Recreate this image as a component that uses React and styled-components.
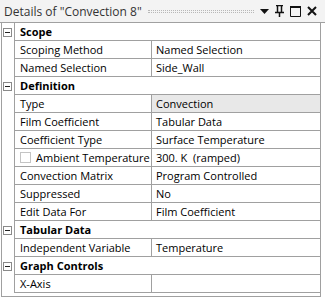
import React from 'react';
import styled, { createGlobalStyle } from 'styled-components';

const GlobalStyle = createGlobalStyle`
  html, body {
    margin: 0;
    padding: 0;
    background: #fff;
  }
  body {
    font-family: "Open Sans", "Noto Sans", sans-serif;
  }
`;

const sections = [
  {
    title: 'Scope',
    rows: [
      { name: 'Scoping Method', value: 'Named Selection' },
      { name: 'Named Selection', value: 'Side_Wall' }
    ]
  },
  {
    title: 'Definition',
    rows: [
      { name: 'Type', value: 'Convection', shaded: true },
      { name: 'Film Coefficient', value: 'Tabular Data' },
      { name: 'Coefficient Type', value: 'Surface Temperature' },
      { name: 'Ambient Temperature', value: '300. K  (ramped)', check: true },
      { name: 'Convection Matrix', value: 'Program Controlled' },
      { name: 'Suppressed', value: 'No' },
      { name: 'Edit Data For', value: 'Film Coefficient' }
    ]
  },
  {
    title: 'Tabular Data',
    rows: [{ name: 'Independent Variable', value: 'Temperature' }]
  },
  {
    title: 'Graph Controls',
    rows: [{ name: 'X-Axis', value: '' }]
  }
];

const Panel = styled.div`
  width: 325px;
  height: 300px;
  background: #fff;
`;

const TitleBar = styled.div`
  height: 22px;
  display: flex;
  align-items: center;
  padding: 0 8px 0 4px;
  background: #f3f3f3;
  border-bottom: 1px solid #a0a0a0;
  font-size: 12px;
  color: #333;
`;

const TitleText = styled.span`
  white-space: nowrap;
`;

const Grip = styled.div`
  flex: 1;
  height: 1px;
  margin: 1px 6px 0 6px;
  border-top: 1px dotted #b8b8b8;
  border-bottom: 1px dotted #b8b8b8;
`;

const Tools = styled.div`
  display: flex;
  align-items: center;
  gap: 6px;
`;

const Grid = styled.div`
  margin-left: 1px;
  width: 320px;
  box-sizing: border-box;
  border: 1px solid #a0a0a0;
  border-top: none;
  padding-bottom: 3px;
  font-size: 11px;
  color: #000;
`;

const Row = styled.div`
  display: grid;
  grid-template-columns: 13px 137px 1fr;
  height: 18px;
`;

const Gutter = styled.div`
  border-right: 1px solid #a0a0a0;
  display: flex;
  align-items: center;
  padding-left: 1px;
`;

const Collapse = styled.div`
  width: 9px;
  height: 9px;
  box-sizing: border-box;
  border: 1px solid #8a8a8a;
  display: flex;
  align-items: center;
  justify-content: center;
  &::after {
    content: '';
    width: 5px;
    height: 1px;
    background: #222;
  }
`;

const Cell = styled.div`
  box-sizing: border-box;
  border-bottom: 1px solid #a0a0a0;
  border-right: ${p => (p.$divider ? '1px solid #a0a0a0' : 'none')};
  background: ${p => (p.$shaded ? '#e8e8e8' : 'transparent')};
  padding-left: ${p => (p.$value ? '4px' : '5px')};
  line-height: 17px;
  white-space: pre;
  overflow: hidden;
  display: flex;
  align-items: center;
`;

const Header = styled(Cell)`
  grid-column: span 2;
  font-weight: 700;
`;

const Check = styled.span`
  width: 11px;
  height: 11px;
  box-sizing: border-box;
  border: 1px solid #c4c4c4;
  background: #fff;
  margin-right: 5px;
  flex: none;
`;

const DropIcon = () => (
  <svg width="9" height="5" viewBox="0 0 9 5">
    <path d="M0 0H9L4.5 5Z" fill="#111" />
  </svg>
);

const PinIcon = () => (
  <svg width="9" height="12" viewBox="0 0 9 12">
    <path d="M1 0.5H8M2.5 0.5V7M6.5 0.5V7M0 7.5H9M4.5 7.5V12" stroke="#111" strokeWidth="1.5" fill="none" />
  </svg>
);

const MaxIcon = () => (
  <svg width="11" height="11" viewBox="0 0 11 11">
    <path d="M0.5 1.5H10.5V10.5H0.5Z" stroke="#111" strokeWidth="1" fill="none" />
    <path d="M0 1H11" stroke="#111" strokeWidth="2" />
  </svg>
);

const CloseIcon = () => (
  <svg width="10" height="10" viewBox="0 0 10 10">
    <path d="M1 1L9 9M9 1L1 9" stroke="#111" strokeWidth="2" />
  </svg>
);

const Section = ({ section }) => (
  <>
    <Row>
      <Gutter>
        <Collapse />
      </Gutter>
      <Header>{section.title}</Header>
    </Row>
    {section.rows.map(row => (
      <Row key={row.name}>
        <Gutter />
        <Cell $divider>
          {row.check && <Check />}
          {row.name}
        </Cell>
        <Cell $value $shaded={row.shaded}>
          {row.value}
        </Cell>
      </Row>
    ))}
  </>
);

const App = () => (
  <Panel>
    <GlobalStyle />
    <TitleBar>
      <TitleText>Details of "Convection 8"</TitleText>
      <Grip />
      <Tools>
        <DropIcon />
        <PinIcon />
        <MaxIcon />
        <CloseIcon />
      </Tools>
    </TitleBar>
    <Grid>
      {sections.map(s => (
        <Section section={s} key={s.title} />
      ))}
    </Grid>
  </Panel>
);

export default App;
